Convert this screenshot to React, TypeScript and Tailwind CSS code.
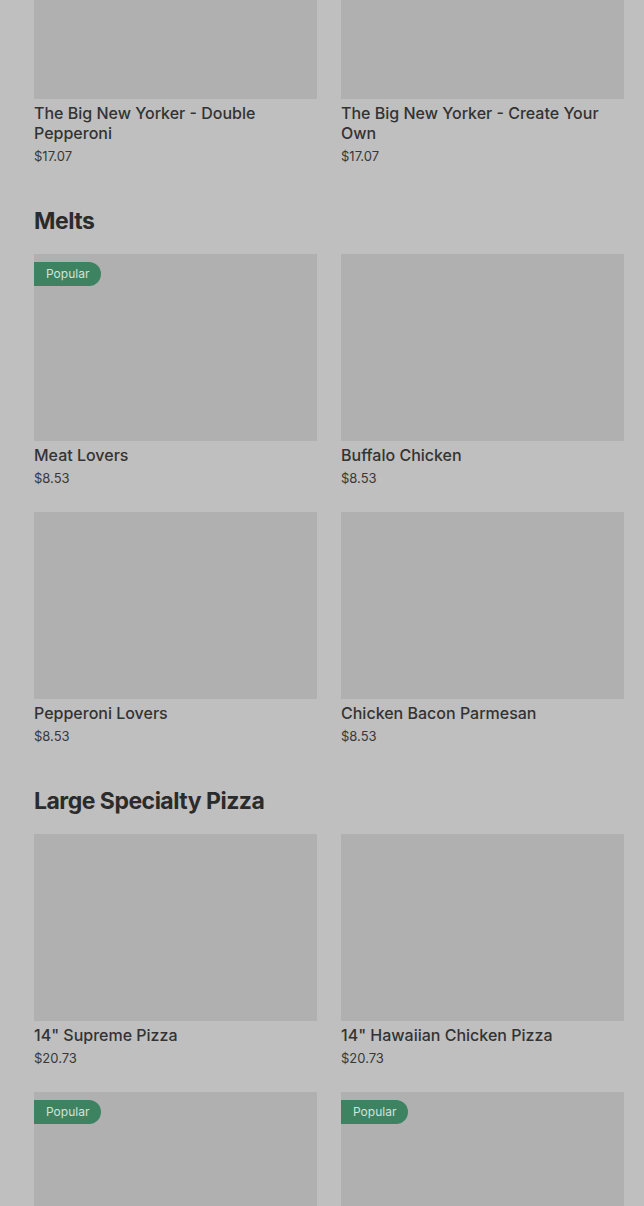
type Item = { name: string; price: string; popular?: boolean };

const sections: { title?: string; items: Item[] }[] = [
  {
    items: [
      { name: "The Big New Yorker - Double Pepperoni", price: "$17.07" },
      { name: "The Big New Yorker - Create Your Own", price: "$17.07" },
    ],
  },
  {
    title: "Melts",
    items: [
      { name: "Meat Lovers", price: "$8.53", popular: true },
      { name: "Buffalo Chicken", price: "$8.53" },
      { name: "Pepperoni Lovers", price: "$8.53" },
      { name: "Chicken Bacon Parmesan", price: "$8.53" },
    ],
  },
  {
    title: "Large Specialty Pizza",
    items: [
      { name: '14" Supreme Pizza', price: "$20.73" },
      { name: '14" Hawaiian Chicken Pizza', price: "$20.73" },
      { name: "Pepperoni Lovers", price: "$20.73", popular: true },
      { name: "Meat Lovers", price: "$20.73", popular: true },
    ],
  },
];

function Card({ item }: { item: Item }) {
  return (
    <div className="flex flex-col">
      <div className="relative h-[187px] bg-[#b0b0b0]">
        {item.popular && (
          <span className="absolute left-0 top-2 h-6 pl-3 pr-3 flex items-center rounded-r-full bg-[#3d8261] text-[#d3e3d9] text-[12px] font-['Inter',sans-serif]">
            Popular
          </span>
        )}
      </div>
      <div className="mt-1 pr-6 text-[16px] leading-5 font-medium text-[#333333] font-['Inter',sans-serif]">
        {item.name}
      </div>
      <div className="mt-[3px] text-[13px] leading-5 text-[#383838] font-['Inter',sans-serif]">
        {item.price}
      </div>
    </div>
  );
}

export default function App() {
  return (
    <div className="h-[1206px] w-[644px] overflow-hidden bg-[#bfbfbf]">
      <div className="-mt-[88px] pl-[34px] pr-5">
        {sections.map((s, i) => (
          <section key={i} className={i > 0 ? "mt-[39px]" : ""}>
            {s.title && (
              <h2 className="mb-[17px] text-[23px] leading-8 font-bold tracking-[-0.5px] text-[#2b2b2b] font-['Inter',sans-serif]">
                {s.title}
              </h2>
            )}
            <div className="grid grid-cols-2 gap-x-6 gap-y-6">
              {s.items.map((it, j) => (
                <Card key={j} item={it} />
              ))}
            </div>
          </section>
        ))}
      </div>
    </div>
  );
}
